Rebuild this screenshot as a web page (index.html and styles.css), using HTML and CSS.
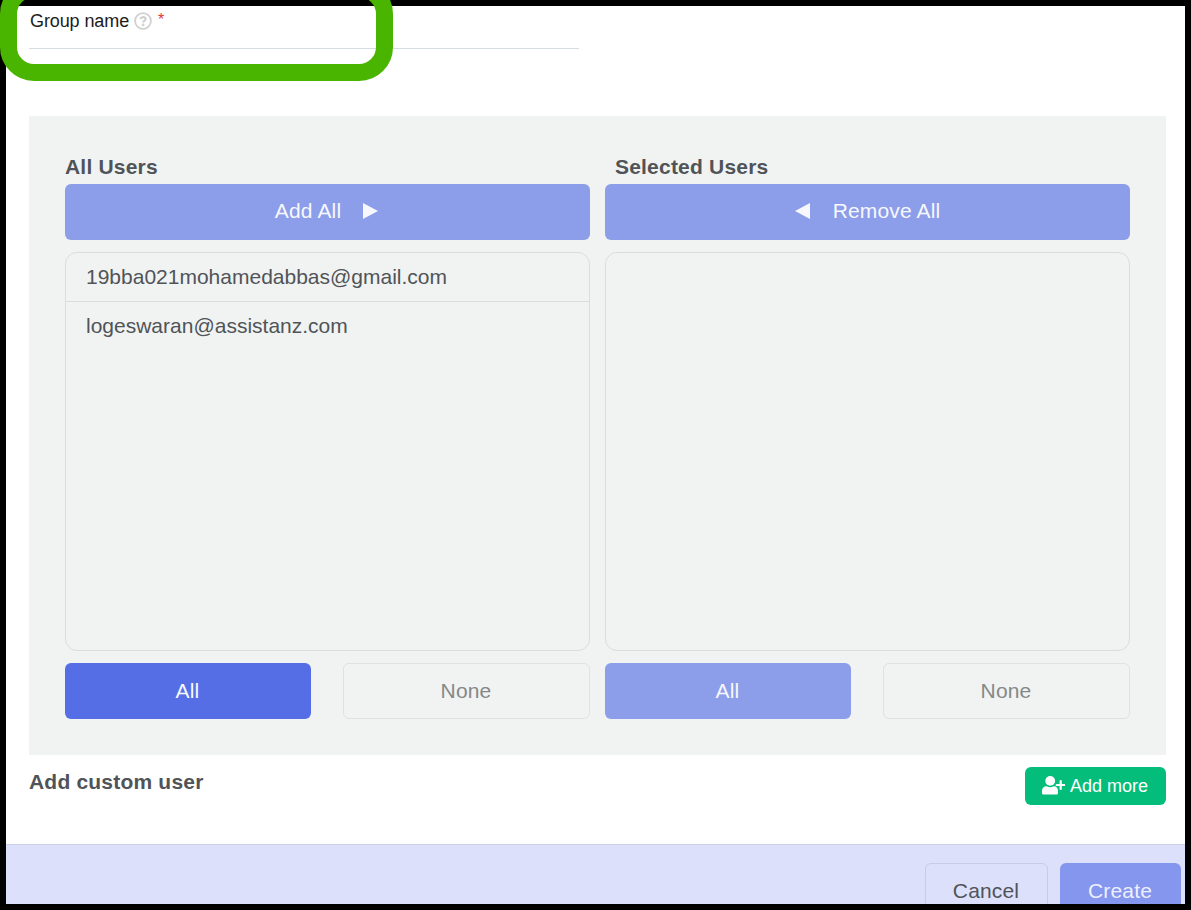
FILE: index.html
```html
<!DOCTYPE html>
<html lang="en">
<head>
<meta charset="utf-8">
<title>Create group</title>
<link rel="stylesheet" href="styles.css">
</head>
<body>
<main class="page">
  <div class="field">
    <label class="field-label" for="group-name">Group name
      <svg class="help" viewBox="0 0 18 18"><circle cx="9" cy="9" r="7.9" fill="none" stroke="#d0d0d0" stroke-width="1.8"/><path d="M6.300 7.200Q7 5.200 9.100 5.200Q11.600 5.200 11.600 7.100Q11.600 8.200 10.200 8.900Q9.100 9.400 9.100 10.500" fill="none" stroke="#d0d0d0" stroke-width="2.200"/><circle cx="9.100" cy="12.900" r="1.400" fill="#d0d0d0"/></svg>
      <span class="required">*</span>
    </label>
    <input class="field-input" id="group-name" type="text">
  </div>
  <section class="picker">
    <div class="column">
      <h2 class="title">All Users</h2>
      <button class="btn faded">Add All<svg class="arrow right" viewBox="0 0 15 16"><path d="M0 0L15 8L0 16Z" fill="currentColor"/></svg></button>
      <ul class="list">
        <li class="item">19bba021mohamedabbas@gmail.com</li>
        <li class="item">logeswaran@assistanz.com</li>
      </ul>
      <div class="actions">
        <button class="btn">All</button>
        <button class="btn outline">None</button>
      </div>
    </div>
    <div class="column">
      <h2 class="title inset">Selected Users</h2>
      <button class="btn faded"><svg class="arrow left" viewBox="0 0 15 16"><path d="M15 0L0 8L15 16Z" fill="currentColor"/></svg>Remove All</button>
      <ul class="list"></ul>
      <div class="actions">
        <button class="btn faded">All</button>
        <button class="btn outline">None</button>
      </div>
    </div>
  </section>
  <section class="custom">
    <h2 class="title">Add custom user</h2>
    <button class="add-more"><svg class="user-plus" viewBox="0 0 23 19"><circle cx="8.200" cy="4.900" r="4.900" fill="currentColor"/><path d="M0 15.200Q0 10.300 4.800 10.300Q8.200 12 11.600 10.300Q16 10.300 16 15.200V17Q16 18.500 14.500 18.500H1.500Q0 18.500 0 17Z" fill="currentColor"/><path d="M18.700 5V13M14.700 9H22.700" stroke="currentColor" stroke-width="2.200" stroke-linecap="round" fill="none"/></svg>Add more</button>
  </section>
  <footer class="footer">
    <button class="btn cancel">Cancel</button>
    <button class="btn create">Create</button>
  </footer>
</main>
<div class="highlight"></div>
</body>
</html>
```
FILE: styles.css
```css
* { box-sizing: border-box; }

body {
  margin: 0;
  height: 910px;
  padding: 6px;
  overflow: hidden;
  background: #000;
  color: #505358;
  font-family: "Liberation Sans", Arial, sans-serif;
  font-size: 21px;
}

button { font: inherit; }

.page {
  display: flex;
  flex-direction: column;
  height: 898px;
  overflow: hidden;
  background: #fff;
}

.field {
  display: flex;
  flex-direction: column;
  width: 550px;
  height: 43px;
  margin-left: 23px;
  flex: none;
}

.field-label {
  display: flex;
  align-items: center;
  height: 29px;
  padding: 1px 0 0 1px;
  color: #1c1c1c;
  font-size: 18px;
  letter-spacing: -0.1px;
}

.help {
  width: 18px;
  height: 18px;
  margin: 0 6px 1px 5px;
}

.required {
  margin-bottom: 3px;
  color: #e53935;
  font-size: 16px;
}

.field-input {
  height: 14px;
  padding: 0;
  border: 0;
  border-bottom: 1px solid #d6dde1;
  background: transparent;
  outline: none;
}

.picker {
  display: flex;
  flex: none;
  gap: 15px;
  height: 639px;
  margin: 67px 19px 0 23px;
  padding: 36px;
  background: #f0f3f2;
}

.column {
  display: flex;
  flex-direction: column;
  width: 525px;
}

.title {
  height: 32px;
  margin: 0;
  font-size: 21px;
  font-weight: bold;
  letter-spacing: 0.2px;
  line-height: 30px;
}

.inset { padding-left: 10px; }

.btn {
  display: flex;
  align-items: center;
  justify-content: center;
  height: 56px;
  flex: none;
  padding: 0 0 2px;
  border: 0;
  border-radius: 6px;
  background: #556ee6;
  color: #f7f8fe;
  letter-spacing: 0.15px;
}

.faded { background: #8c9de9; }

.arrow {
  width: 15px;
  height: 16px;
}

.right { margin: 0 2px 0 22px; }

.left { margin: 0 23px 0 0; }

.list {
  height: 399px;
  margin: 12px 0;
  padding: 0;
  border: 1px solid #dadddd;
  border-radius: 12px;
  list-style: none;
}

.item {
  height: 49px;
  padding-left: 20px;
  line-height: 48px;
}

.item + .item { border-top: 1px solid #dadddd; }

.item:first-child { height: 48px; }

.actions {
  display: grid;
  grid-template-columns: 246px 247px;
  justify-content: space-between;
}

.actions .btn { padding: 0 1px 0 0; }

.actions .outline {
  border: 1px solid #e0e2e2;
  background: transparent;
  color: #868889;
}

.custom {
  display: flex;
  flex: none;
  justify-content: space-between;
  height: 89px;
  padding: 12px 19px 0 23px;
}

.add-more {
  display: flex;
  align-items: center;
  justify-content: center;
  gap: 5px;
  width: 141px;
  height: 38px;
  padding: 0 1px 0 0;
  border: 0;
  border-radius: 6px;
  background: #05bd7b;
  color: #fff;
  font-size: 18px;
}

.user-plus {
  width: 23px;
  height: 19px;
  margin-bottom: 1px;
}

.footer {
  display: flex;
  flex: none;
  justify-content: flex-end;
  gap: 12px;
  height: 96px;
  padding: 18px 4px 0 0;
  border-top: 1px solid #cdd1e8;
  background: #dce0fb;
}

.footer .btn { padding: 0 1px 0 0; }

.cancel {
  width: 123px;
  border: 1px solid #c9cde3;
  background: transparent;
  color: #505358;
}

.create {
  width: 121px;
  background: #8496ed;
  color: #eef0fd;
}

.highlight {
  position: absolute;
  top: -20px;
  left: 0;
  width: 393.400px;
  height: 100.500px;
  border: 17px solid #4ab500;
  border-radius: 34px;
  pointer-events: none;
}
```
